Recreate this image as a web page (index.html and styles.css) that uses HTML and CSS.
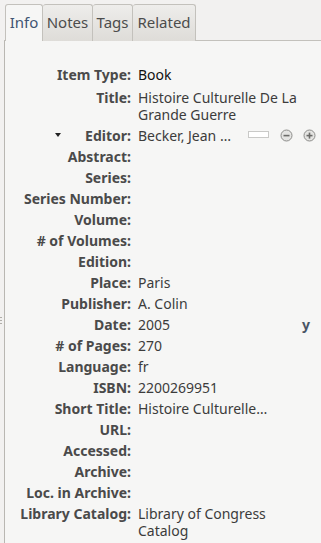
FILE: index.html
```html
<!DOCTYPE html>
<html lang="en">
<head>
  <meta charset="UTF-8" />
  <title>Item pane</title>
  <link rel="stylesheet" href="styles.css">
</head>
<body>
  <div class="pane">
    <div class="tabs">
      <div class="tab active">Info</div>
      <div class="tab">Notes</div>
      <div class="tab">Tags</div>
      <div class="tab">Related</div>
    </div>
    <div class="panel">
      <div class="grip"><span></span><span></span><span></span></div>
      <div class="fields">
        <div class="label tall">Item Type:</div><div class="value tall type">Book</div>
        <div class="label">Title:</div><div class="value">Histoire Culturelle De La Grande Guerre</div>
        <div class="label"><span class="twisty"></span>Editor:</div>
        <div class="value creator">
          <span class="name">Becker, Jean …</span>
          <span class="mode"></span>
          <span class="btn"><svg width="13" height="13" viewBox="0 0 13 13"><circle cx="6.5" cy="6.5" r="5.5" fill="#e4e4e2" stroke="#8d8d8b"/><rect x="3.5" y="5.8" width="6" height="1.6" fill="#6b6b69"/></svg></span>
          <span class="btn"><svg width="13" height="13" viewBox="0 0 13 13"><circle cx="6.5" cy="6.5" r="5.5" fill="#e4e4e2" stroke="#8d8d8b"/><rect x="3.5" y="5.8" width="6" height="1.6" fill="#6b6b69"/><rect x="5.7" y="3.6" width="1.6" height="6" fill="#6b6b69"/></svg></span>
        </div>
        <div class="label">Abstract:</div><div class="value"></div>
        <div class="label">Series:</div><div class="value"></div>
        <div class="label">Series Number:</div><div class="value"></div>
        <div class="label">Volume:</div><div class="value"></div>
        <div class="label"># of Volumes:</div><div class="value"></div>
        <div class="label">Edition:</div><div class="value"></div>
        <div class="label">Place:</div><div class="value">Paris</div>
        <div class="label">Publisher:</div><div class="value">A. Colin</div>
        <div class="label">Date:</div><div class="value date"><span>2005</span><b class="ymd">y</b></div>
        <div class="label"># of Pages:</div><div class="value">270</div>
        <div class="label">Language:</div><div class="value">fr</div>
        <div class="label">ISBN:</div><div class="value">2200269951</div>
        <div class="label">Short Title:</div><div class="value">Histoire Culturelle…</div>
        <div class="label">URL:</div><div class="value"></div>
        <div class="label">Accessed:</div><div class="value"></div>
        <div class="label">Archive:</div><div class="value"></div>
        <div class="label">Loc. in Archive:</div><div class="value"></div>
        <div class="label">Library Catalog:</div><div class="value">Library of Congress Catalog</div>
      </div>
    </div>
  </div>
</body>
</html>
```

FILE: styles.css
```css
* { margin: 0; padding: 0; box-sizing: border-box; }
html, body { height: 100%; }
body {
  background: #f2f1f0;
  font-family: 'Noto Sans', 'Open Sans', sans-serif;
  font-size: 14px;
  color: #3c3c3c;
  overflow: hidden;
}
.pane { height: 100%; padding: 4px 0 0 4px; display: flex; flex-direction: column; }

/* tabs */
.tabs { display: flex; padding-left: 1px; height: 37px; position: relative; z-index: 1; }
.tab {
  height: 37px;
  padding: 7px 0 0 0;
  font-size: 15px;
  text-align: center;
  color: #4c4c4c;
  background: linear-gradient(#eeedeb, #dedcd8);
  border: 1px solid #c3c1bc;
  border-bottom: none;
  border-left: none;
  border-radius: 3px 3px 0 0;
}
.tab:nth-child(1) { width: 38px; border-left: 1px solid #c3c1bc; }
.tab:nth-child(2) { width: 50px; }
.tab:nth-child(3) { width: 40px; }
.tab:nth-child(4) { width: 63px; }
.tab.active { background: #f6f6f5; color: #3f5472; }

.panel {
  flex: 1;
  position: relative;
  background: #f6f6f5;
  border-top: 1px solid #c3c1bc;
  border-left: 1px solid #b9b7b2;
  margin-top: -1px;
  padding-top: 23px;
}
.grip { position: absolute; left: -5px; top: 276px; display: flex; flex-direction: column; gap: 2px; }
.grip span { width: 2px; height: 1px; background: #b0aea9; }

.fields {
  display: grid;
  grid-template-columns: 126px 175px;
  column-gap: 7px;
  line-height: 17px;
}
.label, .value { padding: 2px 0; min-height: 21px; }
.label.tall, .value.tall { min-height: 23px; }
.label { text-align: right; font-weight: bold; color: #4a4a4a; white-space: nowrap; }
.value.type { color: #111; }

.twisty {
  display: inline-block;
  vertical-align: middle;
  margin: -4px 24px 0 0;
  border-left: 3.5px solid transparent;
  border-right: 3.5px solid transparent;
  border-top: 4px solid #222;
}
.creator { display: flex; align-items: center; white-space: nowrap; height: 21px; }
.creator .name { width: 106px; flex-shrink: 0; overflow: hidden; }
.mode { width: 21px; height: 7px; flex-shrink: 0; border: 1px solid #c9c9c7; background: #fff; margin: -3px 0 0 4px; }
.btn { display: flex; flex-shrink: 0; margin-left: 11px; }
.btn + .btn { margin-left: 10px; }
.date { display: flex; justify-content: space-between; }
.ymd { color: #4a5566; font-size: 14px; margin-right: 3px; }
```
